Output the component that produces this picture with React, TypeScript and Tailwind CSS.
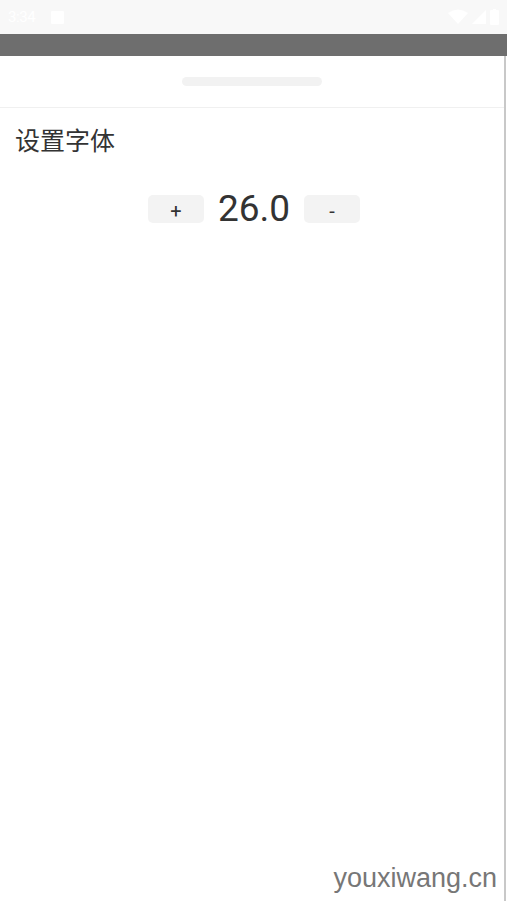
import { useState } from 'react';

export default function App() {
  const [size, setSize] = useState(26);

  return (
    <div className="w-[507px] h-[901px] flex flex-col bg-white overflow-hidden font-['Roboto','Noto_Sans_CJK_SC',sans-serif]">
      {/* status bar */}
      <div className="h-[34px] bg-[#f8f8f8] flex items-center justify-between px-[8px] text-white">
        <div className="flex items-center gap-[16px]">
          <span className="text-[15px] tracking-tight">3:34</span>
          <svg width="13" height="13" viewBox="0 0 13 13">
            <rect x="0" y="0" width="13" height="13" rx="1" fill="white" />
          </svg>
        </div>
        <div className="flex items-center gap-[4px]">
          <svg width="20" height="16" viewBox="0 0 20 16">
            <path d="M10 15 L0 4 Q10 -3 20 4 Z" fill="white" />
          </svg>
          <svg width="14" height="14" viewBox="0 0 14 14">
            <path d="M14 0 L14 14 L0 14 Z" fill="white" />
          </svg>
          <svg width="9" height="16" viewBox="0 0 9 16">
            <rect x="0" y="1" width="9" height="15" rx="1" fill="white" />
            <rect x="3" y="0" width="3" height="2" fill="white" />
          </svg>
        </div>
      </div>
      <div className="h-[22px] bg-[#6e6e6e]" />

      {/* sheet */}
      <div className="flex-1 flex flex-col border-r-2 border-[#c8c8c8] mr-[1px] relative">
        <div className="h-[52px] flex items-center justify-center border-b border-[#f0f0f0]">
          <div className="w-[140px] h-[9px] rounded-full bg-[#f2f2f2]" />
        </div>
        <div className="px-[15px] pt-[18px] text-[25px] leading-[32px] text-[#333]">设置字体</div>
        <div className="flex items-center justify-center gap-[14px] mt-[29px] pl-[4px]">
          <button
            onClick={() => setSize(size + 1)}
            className="w-[56px] h-[28px] rounded-[5px] bg-[#f3f3f3] text-[20px] leading-none text-[#333] flex items-center justify-center pt-[4px]"
          >
            +
          </button>
          <span className="text-[37px] leading-[44px] text-[#333]">{size.toFixed(1)}</span>
          <button
            onClick={() => setSize(size - 1)}
            className="w-[56px] h-[28px] rounded-[5px] bg-[#f3f3f3] text-[20px] leading-none text-[#333] flex items-center justify-center pt-[4px]"
          >
            -
          </button>
        </div>
        <div className="absolute right-[7px] bottom-[3px] text-[27px] text-[#777] font-['Liberation_Sans',sans-serif]">
          youxiwang.cn
        </div>
      </div>
    </div>
  );
}
